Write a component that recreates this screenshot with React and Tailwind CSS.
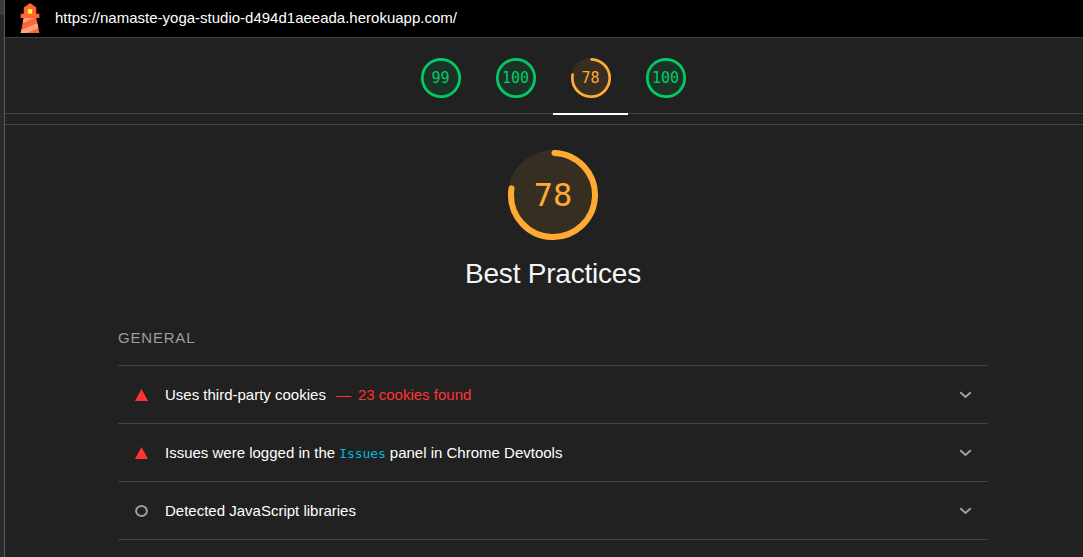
import React from 'react';

const TONES = {
  pass: { stroke: '#00cc66', text: 'text-[#00cc66]' },
  average: { stroke: '#ffaa33', text: 'text-[#ffaa33]' },
};

function Gauge({ score, tone, sizeClass, textClass }) {
  const circumference = 2 * Math.PI * 56;
  const length = score >= 99 ? circumference : (score / 100) * circumference - 4;
  const start = -90 + (2 / circumference) * 360;
  const { stroke, text } = TONES[tone];
  return (
    <div className={`grid place-items-center ${sizeClass} ${text}`}>
      <svg className="col-start-1 row-start-1 size-full" viewBox="0 0 120 120">
        <circle cx="60" cy="60" r="60" fill={stroke} fillOpacity="0.1" />
        <circle
          cx="60"
          cy="60"
          r="56"
          fill="none"
          stroke={stroke}
          strokeWidth="8"
          strokeLinecap="round"
          strokeDasharray={`${length} ${circumference}`}
          transform={`rotate(${start} 60 60)`}
        />
      </svg>
      <span className={`col-start-1 row-start-1 font-['DejaVu_Sans_Mono',monospace] ${textClass}`}>{score}</span>
    </div>
  );
}

function Logo() {
  return (
    <svg className="size-[30px] shrink-0" viewBox="0 0 48 48">
      <path d="m14 7 10-7 10 7v10h5v7h-5l5 24H9l5-24H9v-7h5V7Z" fill="#F63" />
      <path d="M31.561 24H14l-1.689 8.105L31.561 24ZM18.983 48H9l1.022-4.907L35.723 32.27l1.663 7.98L18.983 48Z" fill="#FFA385" />
      <path fill="#FF3" d="M20.5 10h7v7h-7z" />
    </svg>
  );
}

function Audit({ status, children }) {
  return (
    <li className="flex h-[58px] items-center border-b border-[#424242] pl-[17px] pr-4">
      <svg className="h-3 w-[13px] shrink-0" viewBox="0 0 13 12">
        {status === 'fail' ? (
          <path d="M6.5 0 13 12H0Z" fill="#ff3333" />
        ) : (
          <ellipse cx="6.5" cy="6" rx="5.4" ry="5" fill="none" stroke="#9e9e9e" strokeWidth="2" />
        )}
      </svg>
      <span className="ml-[17px] flex grow items-baseline whitespace-pre">{children}</span>
      <svg className="h-2 w-[13px] shrink-0" viewBox="0 0 13 8">
        <path d="M1.2 1.2 6.5 6 11.8 1.2" fill="none" stroke="#a0a0a0" strokeWidth="2" />
      </svg>
    </li>
  );
}

const SCORES = [
  { score: 99, tone: 'pass' },
  { score: 100, tone: 'pass' },
  { score: 78, tone: 'average', active: true },
  { score: 100, tone: 'pass' },
];

export default function App() {
  return (
    <div className="flex h-[557px] w-full overflow-hidden bg-[#212121] font-['Liberation_Sans',Arial,sans-serif] text-[15px] leading-6 text-white">
      <div className="flex w-[5px] shrink-0 flex-col border-r border-[#5a5a5a] bg-[#292a2d]">
        <div className="h-[15px] bg-[#3c3c3c]" />
      </div>
      <main className="min-w-0 grow">
        <header className="flex h-[38px] items-center border-b border-[#424242] bg-black pb-px pl-2.5">
          <Logo />
          <span className="ml-2.5">https://namaste-yoga-studio-d494d1aeeada.herokuapp.com/</span>
        </header>
        <nav className="flex h-[76px] justify-center border-b border-[#424242] pl-[18px]">
          {SCORES.map((item, i) => (
            <div
              key={i}
              className={`flex h-[77px] w-[75px] shrink-0 justify-center pt-5 ${item.active ? 'border-b-2 border-white' : ''}`}
            >
              <Gauge score={item.score} tone={item.tone} sizeClass="size-10" textClass="text-[15px]" />
            </div>
          ))}
        </nav>
        <div className="h-[11px] border-b border-[#424242]" />
        <section className="ml-[113px] w-[870px]">
          <div className="flex flex-col items-center pt-[25px]">
            <Gauge score={78} tone="average" sizeClass="size-[90px]" textClass="text-[32px]" />
            <h1 className="mt-4 text-[28px] leading-9 tracking-[-0.22px] text-[#f5f5f5]">Best Practices</h1>
          </div>
          <h2 className="mt-[34px] h-10 border-b border-[#424242] tracking-[0.8px] text-[#9e9e9e]">GENERAL</h2>
          <ul>
            <Audit status="fail">
              <span>Uses third-party cookies</span>
              <span className="ml-2.5 text-[#ff3333]">—</span>
              <span className="ml-[7px] text-[#ff3333]">23 cookies found</span>
            </Audit>
            <Audit status="fail">
              <span className="pt-px">Issues were logged in the </span>
              <code className="font-['DejaVu_Sans_Mono',monospace] text-[13px] tracking-[-0.1px] text-[#00b8d4]">Issues</code>
              <span> panel in Chrome Devtools</span>
            </Audit>
            <Audit status="info">
              <span>Detected JavaScript libraries</span>
            </Audit>
          </ul>
        </section>
      </main>
    </div>
  );
}
